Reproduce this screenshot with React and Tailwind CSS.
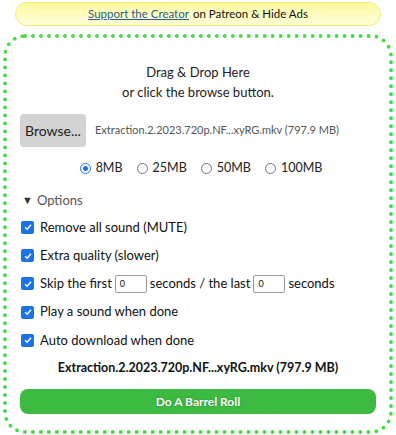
export default function App() {
  const options = [
    { label: "8MB", checked: true },
    { label: "25MB" },
    { label: "50MB" },
    { label: "100MB" },
  ];
  const fileName = "Extraction.2.2023.720p.NF...xyRG.mkv (797.9 MB)";

  return (
    <div className="w-[396px] h-[435px] bg-white text-[#222] font-['Lato',sans-serif] overflow-hidden">
      {/* Patreon banner */}
      <div className="pt-[2px] px-[15px]">
        <div className="h-[24px] rounded-full border border-[#f8ec6e] bg-gradient-to-b from-[#fff9a0] to-[#ffffdc] flex items-center justify-center text-[11.5px] text-[#111]">
          <a href="#" className="text-[#2a5d8a] underline mr-1">
            Support the Creator
          </a>
          on Patreon &amp; Hide Ads
        </div>
      </div>

      {/* Drop zone */}
      <div className="mx-[3px] mt-[8px] h-[400px] rounded-[22px] border-4 border-dotted border-[#45dd45] px-[13px] pt-[24px]">
        <div className="text-center text-[13px] leading-[20px] text-[#222]">
          <div>Drag &amp; Drop Here</div>
          <div>or click the browse button.</div>
        </div>

        <div className="flex items-center mt-[12px]">
          <button className="w-[66px] h-[33px] rounded-[4px] bg-[#d3d3d3] text-[14px] text-[#222]">
            Browse...
          </button>
          <span className="ml-[9px] text-[11px] text-[#555]">{fileName}</span>
        </div>

        <div className="flex items-center justify-center gap-[14px] mt-[12px] text-[12.5px] pl-[6px]">
          {options.map((o) => (
            <label key={o.label} className="flex items-center gap-[5px]">
              <span
                className={
                  o.checked
                    ? "w-[11px] h-[11px] rounded-full border-[1.5px] border-[#1a73e8] flex items-center justify-center"
                    : "w-[11px] h-[11px] rounded-full border-[1.5px] border-[#777]"
                }
              >
                {o.checked && <span className="w-[5px] h-[5px] rounded-full bg-[#1a73e8]" />}
              </span>
              {o.label}
            </label>
          ))}
        </div>

        <div className="mt-[13px] text-[13px] text-[#555] pl-[2px] flex items-center">
          <span className="text-[11px] mr-[4px] text-[#333]">▼</span>Options
        </div>

        <div className="mt-[7px] pl-[1px] flex flex-col gap-[8.25px] text-[13px] text-[#111]">
          <Check label="Remove all sound (MUTE)" />
          <Check label="Extra quality (slower)" />
          <Check>
            Skip the first
            <NumBox />
            seconds / the last
            <NumBox />
            seconds
          </Check>
          <Check label="Play a sound when done" />
          <Check label="Auto download when done" />
        </div>

        <div className="mt-[9px] text-center text-[12.5px] font-bold text-[#111]">{fileName}</div>

        <button className="mt-[11px] w-full h-[25px] rounded-[8px] bg-[#3cba42] text-white text-[12px] font-bold [text-shadow:0_0_2px_rgba(0,0,0,0.3)]">
          Do A Barrel Roll
        </button>
      </div>
    </div>
  );
}

function Check({ label, children }) {
  return (
    <div className="flex items-center h-[20px]">
      <span className="w-[13px] h-[13px] rounded-[2px] bg-[#1a73e8] flex items-center justify-center mr-[6px] shrink-0">
        <svg viewBox="0 0 12 12" className="w-[10px] h-[10px]">
          <path d="M2.5 6.2 L5 8.6 L9.6 3.4" fill="none" stroke="white" strokeWidth="1.8" />
        </svg>
      </span>
      <span className="flex items-center whitespace-nowrap">{label || children}</span>
    </div>
  );
}

function NumBox() {
  return (
    <span className="inline-flex items-center w-[32px] h-[18px] mx-[3px] border border-[#999] rounded-[2px] text-[9px] pl-[4px] bg-white">
      0
    </span>
  );
}
